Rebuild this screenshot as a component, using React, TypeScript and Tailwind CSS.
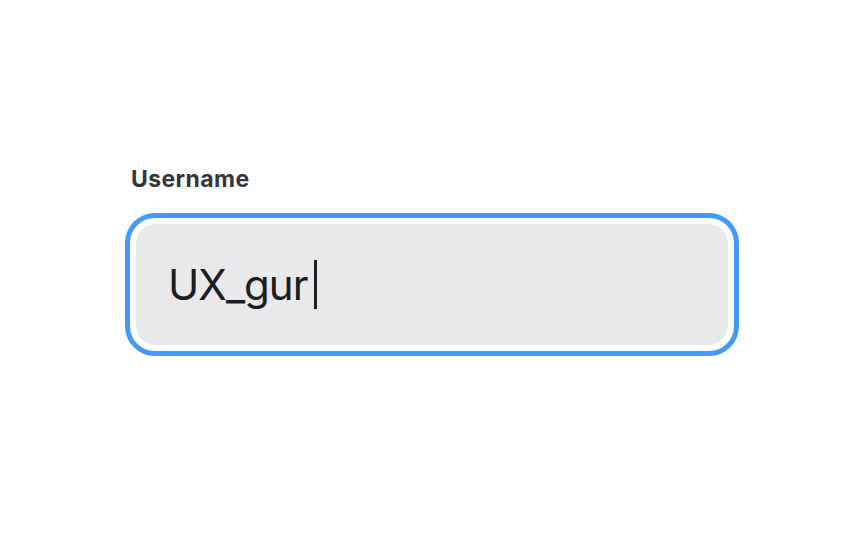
const App = () => {
  return (
    <div
      className="min-h-screen w-full bg-white flex justify-center pt-[164px]"
      style={{ fontFamily: "Inter, 'Noto Sans', sans-serif" }}
    >
      <div className="flex flex-col w-[614px]">
        <label className="ml-[6px] text-[23px] leading-[30px] font-bold tracking-[0.4px] text-[#35353b]">
          Username
        </label>
        <div className="mt-[19px] rounded-[30px] border-[5px] border-[#4499f8] bg-white p-[6px]">
          <div className="h-[121px] rounded-[20px] bg-[#e9e9eb] flex items-center pl-[32px]">
            <span className="text-[42px] leading-none tracking-[-1px] text-[#1d1d21]">UX_gur</span>
            <span className="ml-[7px] w-[3px] h-[49px] bg-[#1d1d21]" />
          </div>
        </div>
      </div>
    </div>
  );
};

export default App;
